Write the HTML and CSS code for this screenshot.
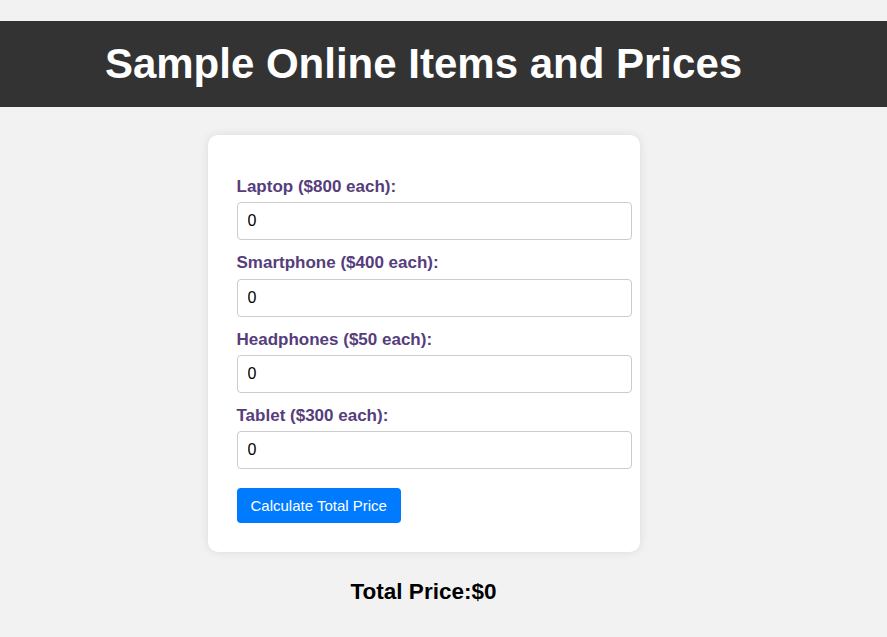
FILE: index.html
```html
<!DOCTYPE html>
<html lang="en">
<head>
<meta charset="utf-8">
<title>Sample Online Items and Prices</title>
<link rel="stylesheet" href="styles.css">
</head>
<body>
<div class="page">
  <header class="banner">
    <h1 class="title">Sample Online Items and Prices</h1>
  </header>
  <main class="main">
    <form class="card">
      <label class="field-label" for="laptop">Laptop ($800 each):</label>
      <input class="qty" id="laptop" type="number" value="0">
      <label class="field-label" for="phone">Smartphone ($400 each):</label>
      <input class="qty" id="phone" type="number" value="0">
      <label class="field-label" for="head">Headphones ($50 each):</label>
      <input class="qty" id="head" type="number" value="0">
      <label class="field-label" for="tablet">Tablet ($300 each):</label>
      <input class="qty" id="tablet" type="number" value="0">
      <button class="calc" type="button">Calculate Total Price</button>
    </form>
    <div class="total">Total Price:$0</div>
  </main>
</div>
</body>
</html>
```

FILE: styles.css
```css
html, body {
  margin: 0;
  padding: 0;
  background: #f2f2f2;
  font-family: "Liberation Sans", Arial, sans-serif;
}

.page {
  padding-top: 21px;
}

.banner {
  background: #333333;
  height: 86px;
  display: flex;
  align-items: center;
  justify-content: center;
  padding-right: 40px;
}

.title {
  margin: 0;
  color: #ffffff;
  font-size: 42px;
  font-weight: bold;
  line-height: 46px;
}

.main {
  width: 847px;
  display: flex;
  flex-direction: column;
  align-items: center;
  padding-top: 28px;
}

.card {
  width: 373px;
  background: #ffffff;
  border-radius: 10px;
  box-shadow: 0 0 10px rgba(0, 0, 0, 0.1);
  padding: 43px 30px 29px 29px;
  display: flex;
  flex-direction: column;
  align-items: flex-start;
}

.field-label {
  display: block;
  color: #563d7c;
  font-weight: bold;
  font-size: 17px;
  line-height: 18px;
  margin-bottom: 6.33px;
}

.qty {
  width: 100%;
  height: 18px;
  padding: 9px 10px;
  border: 1px solid #cccccc;
  border-radius: 4px;
  font-family: "Liberation Sans", Arial, sans-serif;
  font-size: 16px;
  color: #000000;
  margin: 0 0 14px 0;
  background: #ffffff;
  -moz-appearance: textfield;
}

.qty::-webkit-outer-spin-button,
.qty::-webkit-inner-spin-button {
  -webkit-appearance: none;
  margin: 0;
}

.calc {
  margin-top: 5px;
  background: #007bff;
  color: #ffffff;
  border: none;
  border-radius: 4px;
  font-family: "Liberation Sans", Arial, sans-serif;
  font-size: 15px;
  line-height: 17px;
  padding: 9px 14px;
}

.total {
  margin-top: 28px;
  font-size: 22.5px;
  font-weight: bold;
  line-height: 24px;
  color: #000000;
}
```
